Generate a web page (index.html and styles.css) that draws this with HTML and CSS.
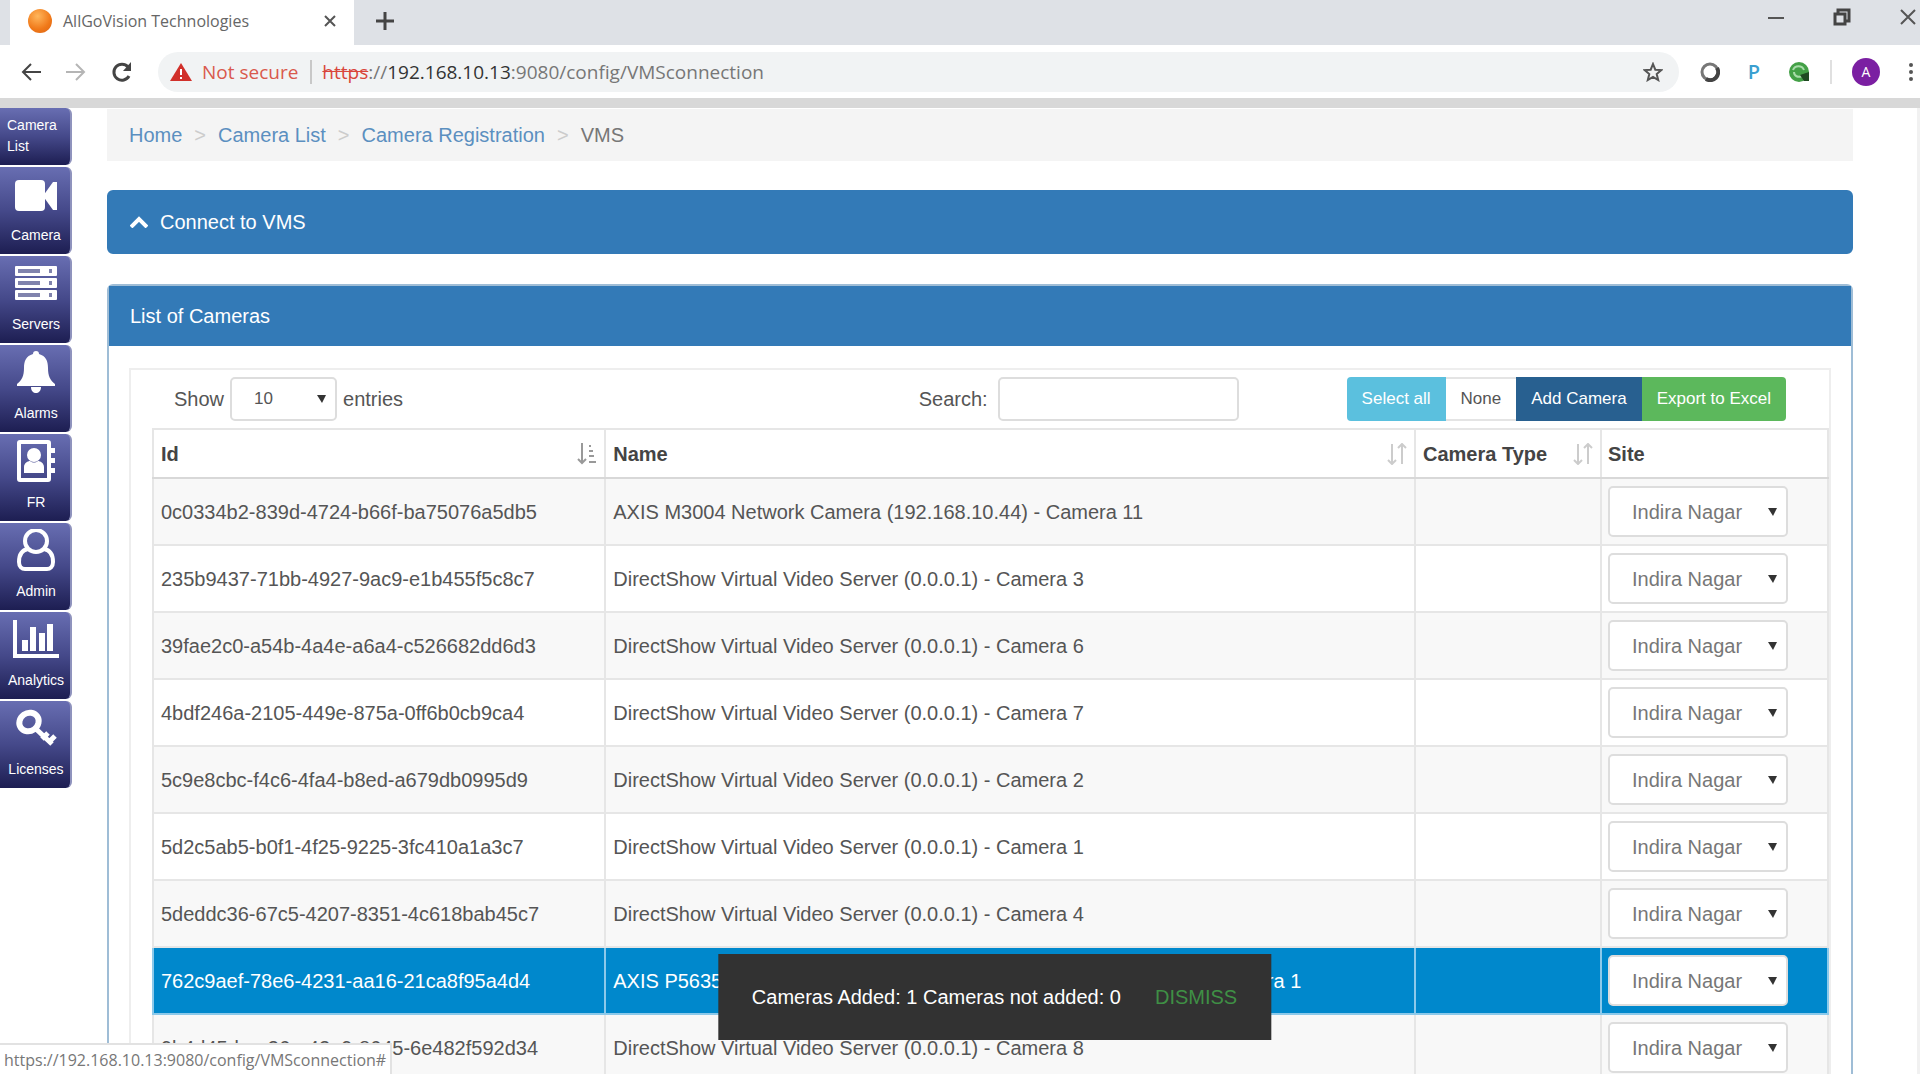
FILE: index.html
```
<!DOCTYPE html>
<html lang="en">
<head>
  <meta charset="UTF-8" />
  <meta name="viewport" content="width=device-width, initial-scale=1.0" />
  <title>AllGoVision Technologies</title>
  <link rel="stylesheet" href="styles.css">
</head>
<body>
  <!-- tab strip -->
  <div class="tab-strip">
    <div class="tab">
      <span class="favicon"></span>
      <span class="tab-title">AllGoVision Technologies</span>
      <button class="icon-btn" aria-label="Close tab">
        <svg width="12" height="12" viewBox="0 0 12 12"><path d="M1 1l10 10M11 1L1 11" stroke="#555" stroke-width="2"/></svg>
      </button>
    </div>
    <button class="icon-btn new-tab" aria-label="New tab">
      <svg width="18" height="18" viewBox="0 0 18 18"><path d="M9 0v18M0 9h18" stroke="#444" stroke-width="3"/></svg>
    </button>
    <div class="window-buttons">
      <button class="icon-btn" aria-label="Minimize">
        <svg width="16" height="16" viewBox="0 0 16 16"><path d="M0 9h16" stroke="#555" stroke-width="2"/></svg>
      </button>
      <button class="icon-btn" aria-label="Restore">
        <svg width="18" height="18" viewBox="0 0 18 18" fill="none" stroke="#444" stroke-width="3"><path d="M2 6h10v10H2zM5 5V2h11v11h-3"/></svg>
      </button>
      <button class="icon-btn" aria-label="Close">
        <svg width="16" height="16" viewBox="0 0 16 16"><path d="M1 1l14 14M15 1L1 15" stroke="#555" stroke-width="2"/></svg>
      </button>
    </div>
  </div>

  <!-- address bar -->
  <div class="toolbar">
    <button class="icon-btn" aria-label="Back">
      <svg width="20" height="20" viewBox="0 0 20 20" fill="none" stroke="#444" stroke-width="2"><path d="M20 10H2M10 2L2 10l8 8"/></svg>
    </button>
    <button class="icon-btn" aria-label="Forward">
      <svg width="20" height="20" viewBox="0 0 20 20" fill="none" stroke="#b5b5b5" stroke-width="2"><path d="M0 10h18M10 2l8 8-8 8"/></svg>
    </button>
    <button class="icon-btn" aria-label="Reload">
      <svg width="22" height="22" viewBox="0 0 22 22" fill="none" stroke="#444" stroke-width="3"><path d="M18 15a8 8 0 1 1-1-9"/><path d="M20 1v9h-8z" fill="#444" stroke="none"/></svg>
    </button>
    <div class="omnibox">
      <svg width="22" height="20" viewBox="0 0 22 20"><path d="M11 1l11 18H0z" fill="#d1302a"/><path d="M11 7v6M11 15v2" stroke="#fff" stroke-width="2"/></svg>
      <span class="not-secure">Not secure</span>
      <span class="url"><s>https</s>://<b>192.168.10.13</b>:9080/config/VMSconnection</span>
      <button class="icon-btn star" aria-label="Bookmark">
        <svg width="20" height="20" viewBox="0 0 20 20" fill="none" stroke="#555" stroke-width="2"><path d="M10 2l2.3 5.7 6 .4-4.600 3.900 1.500 6L10 14.800 4.800 18l1.500-6L1.700 8.100l6-.4z"/></svg>
      </button>
    </div>
    <div class="extensions">
      <svg width="20" height="20" viewBox="0 0 20 20"><circle cx="10" cy="10" r="8" fill="none" stroke="#777" stroke-width="3"/><path d="M17 6a8 8 0 0 1-11 11" fill="none" stroke="#444" stroke-width="4"/></svg>
      <span class="ext-p">P</span>
      <svg width="22" height="20" viewBox="0 0 22 20"><circle cx="11" cy="10" r="10" fill="#43a046"/><path d="M5 8c2-5 9-5 11 0M6 10c0 4 4 6 8 4" fill="none" stroke="#a8dba9" stroke-width="2"/><path d="M12 13l9-3v9h-5z" fill="#1f4a22"/></svg>
      <span class="divider"></span>
      <span class="avatar">A</span>
      <svg width="6" height="20" viewBox="0 0 6 20" fill="#555"><circle cx="3" cy="3" r="2"/><circle cx="3" cy="10" r="2"/><circle cx="3" cy="17" r="2"/></svg>
    </div>
  </div>

  <div class="page">
    <nav class="sidebar">
      <a href="#" class="side-item side-first">Camera List</a>
      <a href="#" class="side-item">
        <svg width="42" height="42" viewBox="0 0 42 42" fill="#fff"><rect x="0" y="7" width="30" height="31" rx="4"/><path d="M28 23L38 9h4v28h-4z"/></svg>
        Camera
      </a>
      <a href="#" class="side-item">
        <svg width="42" height="42" viewBox="0 0 42 42"><g fill="#fff"><rect y="4" width="42" height="10" rx="1"/><rect y="16" width="42" height="10" rx="1"/><rect y="28" width="42" height="10" rx="1"/></g><g fill="#8083ad"><path d="M3 7h22v4H3zM3 19h22v4H3zM3 31h22v4H3zM34 7h3v4h-3zM34 19h3v4h-3zM34 31h3v4h-3z"/></g></svg>
        Servers
      </a>
      <a href="#" class="side-item">
        <svg width="42" height="42" viewBox="0 0 42 42" fill="#fff"><path d="M21 0c2 0 3 1 3 3 7 2 9 7 9 14 0 8 2 12 7 16v2H2v-2c5-4 7-8 7-16 0-7 2-12 9-14 0-2 1-3 3-3zM16 36h10c0 8-10 8-10 0z"/></svg>
        Alarms
      </a>
      <a href="#" class="side-item">
        <svg width="42" height="42" viewBox="0 0 42 42" fill="#fff"><path d="M5 0h28q3 0 3 3v36q0 3-3 3H5q-3 0-3-3V3q0-3 3-3zm1 4v34h26V4z" fill-rule="evenodd"/><path d="M36 8h4v5h-4zM36 18h4v5h-4zM36 28h4v5h-4z"/><circle cx="19" cy="15" r="7"/><path d="M9 33v-6c0-4 4-6 6-6 3 2 5 2 8 0 2 0 6 2 6 6v6z"/></svg>
        FR
      </a>
      <a href="#" class="side-item">
        <svg width="42" height="42" viewBox="0 0 42 42" fill="none" stroke="#fff" stroke-width="4"><circle cx="21" cy="12" r="11"/><path d="M13 20c-6 1-9 6-9 13 0 5 3 7 6 7h22c3 0 6-2 6-7 0-7-3-12-9-13"/></svg>
        Admin
      </a>
      <a href="#" class="side-item">
        <svg width="46" height="42" viewBox="0 0 46 42" fill="#fff"><path d="M0 2h4v34h42v4H0zM9 22h6v11H9zM17 9h6v24h-6zM26 15h6v18h-6zM34 6h6v27h-6z"/></svg>
        Analytics
      </a>
      <a href="#" class="side-item">
        <svg width="42" height="42" viewBox="0 0 42 42" fill="none" stroke="#fff"><ellipse cx="14" cy="15" rx="10" ry="9" stroke-width="6" transform="rotate(-35 14 15)"/><path d="M20 21l17 16M27 32l6-6M33 36l7-7" stroke-width="5"/></svg>
        Licenses
      </a>
    </nav>

    <main class="content">
      <ol class="breadcrumb">
        <li><a href="#">Home</a></li>
        <li><a href="#">Camera List</a></li>
        <li><a href="#">Camera Registration</a></li>
        <li>VMS</li>
      </ol>

      <section class="panel">
        <button class="panel-heading">
          <svg width="18" height="12" viewBox="0 0 18 12" fill="none" stroke="#fff" stroke-width="4"><path d="M1 11l8-8 8 8"/></svg>
          Connect to VMS
        </button>
      </section>

      <section class="panel panel-list">
        <h2 class="panel-heading">List of Cameras</h2>
        <div class="panel-body">
          <div class="table-box">
            <div class="table-tools">
              <label class="length">Show
                <select class="form-control select-length"><option>10</option></select>
                entries</label>
              <label class="search">Search: <input type="text" class="form-control"></label>
              <div class="btn-group">
                <button class="btn btn-info">Select all</button>
                <button class="btn btn-default">None</button>
                <button class="btn btn-primary">Add Camera</button>
                <button class="btn btn-success">Export to Excel</button>
              </div>
            </div>
            <table class="cameras">
              <colgroup>
                <col class="col-id"><col><col class="col-type"><col class="col-site">
              </colgroup>
              <thead>
                <tr>
                  <th><div class="th-inner">Id
                    <svg width="20" height="22" viewBox="0 0 20 22" fill="none" stroke="#999" stroke-width="2"><path d="M5 0v19M1 16l4 4 4-4M12 3h2M12 8h4M12 13h5M12 19h7" /></svg></div></th>
                  <th><div class="th-inner">Name
                    <svg class="sort" width="20" height="22" viewBox="0 0 20 22"><path d="M5 1v19M1 17l4 4 4-4M15 21V2M11 5l4-4 4 4"/></svg></div></th>
                  <th><div class="th-inner">Camera Type
                    <svg class="sort" width="20" height="22" viewBox="0 0 20 22"><path d="M5 1v19M1 17l4 4 4-4M15 21V2M11 5l4-4 4 4"/></svg></div></th>
                  <th>Site</th>
                </tr>
              </thead>
              <tbody>
                <tr>
                  <td>0c0334b2-839d-4724-b66f-ba75076a5db5</td>
                  <td>AXIS M3004 Network Camera (192.168.10.44) - Camera 11</td>
                  <td></td>
                  <td><select class="form-control" aria-label="Site"><option>Indira Nagar</option></select></td>
                </tr>
                <tr>
                  <td>235b9437-71bb-4927-9ac9-e1b455f5c8c7</td>
                  <td>DirectShow Virtual Video Server (0.0.0.1) - Camera 3</td>
                  <td></td>
                  <td><select class="form-control" aria-label="Site"><option>Indira Nagar</option></select></td>
                </tr>
                <tr>
                  <td>39fae2c0-a54b-4a4e-a6a4-c526682dd6d3</td>
                  <td>DirectShow Virtual Video Server (0.0.0.1) - Camera 6</td>
                  <td></td>
                  <td><select class="form-control" aria-label="Site"><option>Indira Nagar</option></select></td>
                </tr>
                <tr>
                  <td>4bdf246a-2105-449e-875a-0ff6b0cb9ca4</td>
                  <td>DirectShow Virtual Video Server (0.0.0.1) - Camera 7</td>
                  <td></td>
                  <td><select class="form-control" aria-label="Site"><option>Indira Nagar</option></select></td>
                </tr>
                <tr>
                  <td>5c9e8cbc-f4c6-4fa4-b8ed-a679db0995d9</td>
                  <td>DirectShow Virtual Video Server (0.0.0.1) - Camera 2</td>
                  <td></td>
                  <td><select class="form-control" aria-label="Site"><option>Indira Nagar</option></select></td>
                </tr>
                <tr>
                  <td>5d2c5ab5-b0f1-4f25-9225-3fc410a1a3c7</td>
                  <td>DirectShow Virtual Video Server (0.0.0.1) - Camera 1</td>
                  <td></td>
                  <td><select class="form-control" aria-label="Site"><option>Indira Nagar</option></select></td>
                </tr>
                <tr>
                  <td>5deddc36-67c5-4207-8351-4c618bab45c7</td>
                  <td>DirectShow Virtual Video Server (0.0.0.1) - Camera 4</td>
                  <td></td>
                  <td><select class="form-control" aria-label="Site"><option>Indira Nagar</option></select></td>
                </tr>
                <tr class="selected">
                  <td>762c9aef-78e6-4231-aa16-21ca8f95a4d4</td>
                  <td>AXIS P5635-E Mk II PTZ Dome Network Camera (192.168.10.42) - Camera 1</td>
                  <td></td>
                  <td><select class="form-control" aria-label="Site"><option>Indira Nagar</option></select></td>
                </tr>
                <tr>
                  <td>9b4d45da-a36a-42a9-8645-6e482f592d34</td>
                  <td>DirectShow Virtual Video Server (0.0.0.1) - Camera 8</td>
                  <td></td>
                  <td><select class="form-control" aria-label="Site"><option>Indira Nagar</option></select></td>
                </tr>
              </tbody>
            </table>
          </div>
        </div>
      </section>

      <div class="toast">
        <span>Cameras Added: 1 Cameras not added: 0</span>
        <button class="dismiss">DISMISS</button>
      </div>
    </main>
    <div class="scroll-edge"></div>
    <div class="status">https://192.168.10.13:9080/config/VMSconnection#</div>
  </div>
</body>
</html>
```
FILE: styles.css
```
* { box-sizing: border-box; }
body {
  margin: 0;
  height: 100vh;
  padding-bottom: 6px;
  display: flex;
  flex-direction: column;
  overflow: hidden;
  background: #fff;
  color: #555;
  font-family: "Liberation Sans", Arial, sans-serif;
  font-size: 20px;
  line-height: 28px;
}
button, select, input { font: inherit; color: inherit; }
a { color: #5b8fc0; text-decoration: none; }
svg { display: block; flex: none; }

/* browser chrome */
.icon-btn {
  border: 0;
  padding: 0;
  background: none;
}
.tab-strip {
  display: flex;
  align-items: center;
  height: 45px;
  flex: none;
  padding-left: 10px;
  background: #dee1e6;
  font-family: "Open Sans", sans-serif;
}
.tab {
  display: flex;
  align-items: center;
  width: 344px;
  height: 45px;
  padding: 0 18px 4px;
  background: #fff;
}
.favicon {
  width: 24px;
  height: 24px;
  margin-right: 11px;
  border-radius: 50%;
  background: radial-gradient(circle at 40% 30%, #ffb65c, #f07818 60%, #d8641a);
}
.tab-title {
  flex: 1;
  font-size: 16px;
  color: #666;
}
.new-tab { margin-left: 22px; padding-bottom: 4px; }
.window-buttons {
  display: flex;
  align-items: center;
  gap: 49px;
  margin-left: auto;
  padding: 0 4px 12px 0;
}
.toolbar {
  display: flex;
  align-items: center;
  height: 63px;
  flex: none;
  gap: 25px;
  padding: 0 6px 0 21px;
  border-bottom: 10px solid #d8d8d8;
  font-family: "Open Sans", sans-serif;
}
.omnibox {
  display: flex;
  align-items: center;
  flex: 1;
  height: 40px;
  padding: 0 16px 0 12px;
  border-radius: 20px;
  background: #f1f3f4;
  font-size: 19px;
}
.not-secure {
  margin-left: 10px;
  padding-right: 12px;
  border-right: 2px solid #c8c8c8;
  line-height: 24px;
  color: #d9594c;
}
.url { margin-left: 10px; color: #777; }
.url s { color: #d9463b; }
.url b { font-weight: 400; color: #333; }
.star { margin-left: auto; }
.extensions {
  display: flex;
  align-items: center;
  gap: 28px;
  margin-left: -4px;
}
.ext-p { color: #3a9fd0; font-weight: 600; }
.divider {
  width: 2px;
  height: 24px;
  margin: 0 -8px;
  background: #e0e0e0;
}
.avatar {
  width: 28px;
  height: 28px;
  border-radius: 50%;
  background: #7b1fa2;
  color: #fff;
  font-size: 14px;
  text-align: center;
}

/* page */
.page {
  position: relative;
  display: flex;
  flex: 1;
  min-height: 0;
  overflow: hidden;
}
.sidebar {
  display: flex;
  flex-direction: column;
  gap: 2px;
  width: 72px;
}
.side-item {
  display: flex;
  flex-direction: column;
  align-items: center;
  flex: none;
  height: 87px;
  padding: 6px 0 0 2px;
  gap: 6px;
  border-right: 2px solid #8f93bd;
  border-radius: 0 6px 6px 0;
  background: linear-gradient(#686eb2, #45498a 50%, #1d1e52);
  color: #fff;
  font-size: 14px;
}
.side-first {
  display: block;
  height: 57px;
  padding: 7px;
  line-height: 21px;
}
.content {
  position: relative;
  flex: 1;
  padding: 0 64px 0 35px;
}
.scroll-edge { width: 3px; background: #f1f1f1; }
.breadcrumb {
  display: flex;
  margin: 1px 0 29px;
  padding: 12px 22px;
  list-style: none;
  background: #f4f4f4;
  color: #777;
}
.breadcrumb li + li::before {
  content: ">";
  padding: 0 12px;
  color: #ccc;
}
.panel {
  margin-bottom: 30px;
  border: 2px solid #337ab7;
  border-radius: 6px;
  background: #fff;
}
.panel-heading {
  display: flex;
  align-items: center;
  gap: 12px;
  width: 100%;
  height: 60px;
  margin: 0;
  padding: 0 21px;
  border: 0;
  background: #337ab7;
  color: #fff;
  font-size: 20px;
  font-weight: 400;
}
.panel-list { border-color: #9fbdd6; }
.panel-body { padding: 22px 20px; }
.table-box {
  border: 2px solid #eee;
}
.table-tools {
  display: flex;
  align-items: center;
  padding: 7px 43px 7px 43px;
}
.form-control {
  height: 44px;
  border: 2px solid #ddd;
  border-radius: 5px;
  background-color: #fff;
}
select.form-control {
  appearance: none;
  padding: 0 22px;
  background-image: url("data:image/svg+xml,%3Csvg xmlns='http://www.w3.org/2000/svg' width='9' height='8'%3E%3Cpath d='M0 0h9L5 8z' fill='%23333'/%3E%3C/svg%3E");
  background-repeat: no-repeat;
  background-position: right 9px center;
}
.length, .search {
  display: flex;
  align-items: center;
  gap: 6px;
}
.select-length { width: 107px; font-size: 17px; }
.search {
  gap: 10px;
  margin: 0 108px 0 auto;
}
.search input { width: 241px; }
.btn-group { display: flex; }
.btn {
  height: 44px;
  padding: 0 15px;
  border: 0;
  color: #fff;
  font-size: 17px;
}
.btn-info { background: #5bc0de; border-radius: 4px 0 0 4px; }
.btn-default {
  background: #fff;
  color: #555;
  border-top: 2px solid #e4e4e4;
  border-bottom: 2px solid #e4e4e4;
}
.btn-primary { background: #286090; }
.btn-success { background: #5cb85c; border-radius: 0 4px 4px 0; }

.cameras {
  width: calc(100% - 21px);
  margin-left: 21px;
  border-collapse: collapse;
  table-layout: fixed;
}
.col-id { width: 27%; }
.col-type { width: 186px; }
.col-site { width: 227px; }
.cameras th, .cameras td {
  padding: 7px;
  border: 2px solid #e6e6e6;
  text-align: left;
}
.cameras th {
  padding: 10px 7px 9px;
  border-bottom-color: #d8d8d8;
  color: #444;
}
.cameras td:last-child, .cameras th:last-child { padding-left: 6px; }
.cameras td .form-control {
  display: block;
  width: 180px;
  height: 51px;
  color: #777;
}
.cameras tbody tr:nth-child(odd) { background: #f8f8f8; }
.cameras tbody tr.selected {
  background: #0088cc;
  color: #fff;
}
.cameras tr.selected td { border-color: #8cc9ea; }
.th-inner {
  display: flex;
  align-items: center;
  justify-content: space-between;
}
.sort {
  fill: none;
  stroke: #ccc;
  stroke-width: 2;
}

/* overlays */
.toast {
  position: absolute;
  bottom: 34px;
  left: 50%;
  transform: translateX(-50%);
  display: flex;
  align-items: center;
  gap: 34px;
  height: 86px;
  padding: 0 34px;
  background: #323232;
  color: #fff;
  white-space: nowrap;
}
.dismiss {
  padding: 0;
  border: 0;
  background: none;
  color: #3f8f45;
}
.status {
  position: absolute;
  left: 0;
  bottom: 0;
  padding: 2px 4px 1px;
  border-top: 2px solid #e2e2e2;
  border-right: 2px solid #e2e2e2;
  background: #fff;
  color: #777;
  font: 16px/26px "Open Sans", sans-serif;
}
```
